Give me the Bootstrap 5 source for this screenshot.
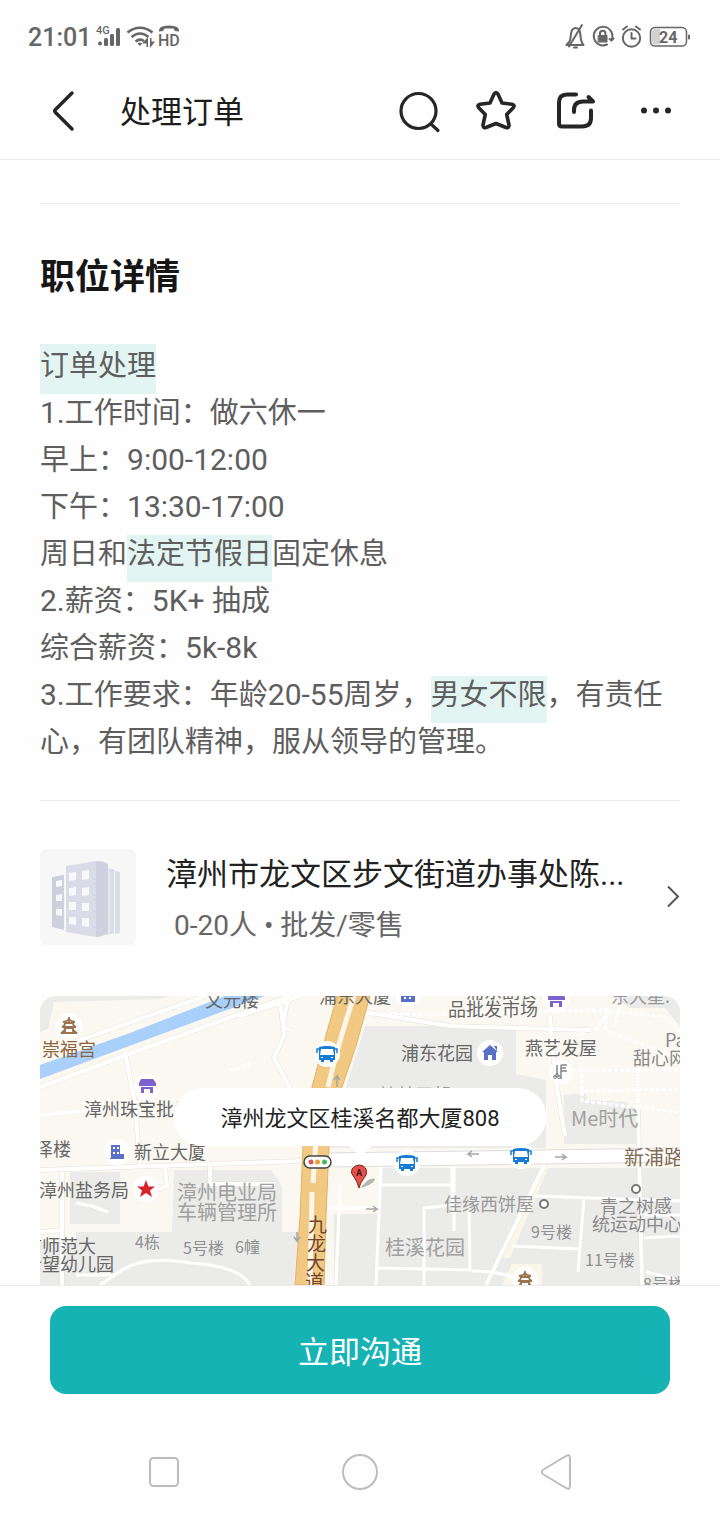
<!DOCTYPE html>
<html lang="zh-CN">
<head>
<meta charset="utf-8">
<meta name="viewport" content="width=device-width, initial-scale=1">
<title>处理订单</title>
<link href="https://cdn.jsdelivr.net/npm/bootstrap@5.3.0/dist/css/bootstrap.min.css" rel="stylesheet">
<style>
  body { font-family: Roboto, "Noto Sans CJK SC", sans-serif; background: #fefefe; color: #222; }
  svg { display: block; flex: none; }
  .status-bar { height: 72px; padding: 2px 28px 0; color: #666; }
  .clock { font-size: 25px; font-weight: 500; line-height: 32px; padding-top: 2px; }
  .top-bar { height: 88px; padding: 0 40px 4px; border-bottom: 1px solid #ececec; }
  .top-bar h1 { font-size: 31px; line-height: 46px; font-weight: 400; color: #1c1c1c; padding-bottom: 2px; }
  .icon-btn { padding: 0; border: 0; color: #262626; }
  .page-body { padding: 43px 40px 0; }
  .rule { border-top: 1px solid #ececec; }
  .section-title { font-size: 35px; line-height: 48px; font-weight: 700; color: #161616; margin: 50px 0 41px; }
  .detail-text { font-size: 29px; line-height: 47px; color: #5e5e5e; margin-bottom: 34px; }
  .num { font-size: 30px; line-height: 1; }
  .hl { background: #e3f5f3; padding: 2px 0 11px; }
  .hl-top { padding-top: 5px; }
  .company { padding: 45px 0 48px; color: #222; }
  .company-text { min-width: 0; margin-left: 30px; }
  .company-name { font-size: 31px; line-height: 58px; }
  .company-meta { font-size: 28px; line-height: 44px; color: #666; padding-left: 8px; }
  .map-box { border-radius: 16px 16px 0 0; background: #faf8f0; overflow: hidden; }
  .map-box svg { width: 100%; height: auto; }
  .map-tip { top: 92px; left: 50%; transform: translateX(-50%); background: #fff; border-radius: 29px; font-size: 22px; line-height: 54px; padding: 4px 47px 0; color: #222; white-space: nowrap; }
  .map-tip::after { content: ""; position: absolute; left: 50%; top: 100%; border: 11px solid transparent; border-top-color: #fff; border-bottom: 0; transform: translateX(-50%); }
  .action-bar { border-top: 1px solid #ececec; padding: 20px 50px 0; background: #fefefe; }
  .btn-chat { background: #16b3b4; color: #fff; border: 0; border-radius: 16px; font-size: 31px; line-height: 48px; padding: 23px 0 17px; }
  .btn-chat:hover { background: #129fa0; color: #fff; }
  .sys-nav { padding: 56px 50px 28px; }
  .sys-nav .icon-btn { color: #bdbdbd; }
</style>
</head>
<body class="min-vh-100 d-flex flex-column">

<header>
  <div class="status-bar d-flex align-items-center justify-content-between">
    <div class="d-flex align-items-center gap-1">
      <span class="clock">21:01</span>
      <svg width="88" height="28" viewBox="-2 0 88 28" fill="currentColor" aria-hidden="true">
        <text x="-1" y="11" font-size="11" font-weight="500">4G</text>
        <circle cx="3" cy="20.500" r="2"/>
        <rect x="7" y="15" width="4" height="8" rx="1.500"/><rect x="13" y="11" width="4" height="12" rx="1.500"/><rect x="19" y="5" width="4" height="18" rx="1.500"/>
        <g fill="none" stroke="currentColor" stroke-width="2.600"><path d="M30.500 9.500Q43 0 55.500 9.500M34.500 14Q43 7 51.500 14M38.500 18.500Q43 15 47 18"/></g>
        <path d="M40.500 20.500Q43 18.500 45 20.500L43 23ZM51 14v10h-1.500v-3.500h-4.500ZM53 25V15h1.500v3.500H58Z"/>
        <path d="M62 8.500Q61 2.500 72 2.500Q83 2.500 82 8.500L78 8L76.500 5.500H67.500L66 8Z"/>
        <text x="61" y="23" font-size="16" font-weight="500">HD</text>
      </svg>
    </div>
    <svg width="128" height="28" viewBox="0 0 128 28" fill="none" stroke="currentColor" stroke-width="2" stroke-linecap="round" stroke-linejoin="round" aria-label="电量 24">
      <path d="M2.500 22h17M5.500 18.500C7.500 16 6 9 8.500 6.500Q11.500 3.500 15 6.500C17.500 9 15 17 19.500 22M2.500 22L5.500 18.500M18 2L5 23.500M10 24.500h3"/>
      <path d="M43 21.500A9.300 9.300 0 1 1 47.500 17M49.500 15.500l-2 2-2-1.500"/>
      <rect x="34.500" y="12.500" width="8.500" height="6.500" fill="currentColor" stroke-width="1"/><path d="M36 12V10.500a2.700 2.700 0 0 1 5.400 0V12"/>
      <circle cx="67.500" cy="15" r="8.700"/><path d="M67.500 10v5.500h4M59 6.500l4-3M76 6.500l-4-3"/>
      <rect x="86.500" y="4.500" width="36" height="18.500" rx="4.500" stroke-width="1.500"/>
      <path d="M91.500 6H96v15.500h-4.500A3.500 3.500 0 0 1 88 18V9.500A3.500 3.500 0 0 1 91.500 6Z" fill="#d2d2d2" stroke="none"/>
      <path d="M125 12.500v3"/>
      <text x="95" y="20" font-size="16" font-weight="700" fill="currentColor" stroke="none">24</text>
    </svg>
  </div>

  <nav class="top-bar d-flex align-items-center justify-content-between" aria-label="页面导航">
    <div class="d-flex align-items-center">
      <button type="button" class="btn icon-btn me-4" aria-label="返回">
        <svg width="56" height="56" viewBox="0 0 56 56" fill="none" stroke="currentColor" stroke-width="3.500" stroke-linecap="round" stroke-linejoin="round"><path d="M32 7L15.500 23.500Q14 25 15.500 26.500L32 43"/></svg>
      </button>
      <h1 class="m-0">处理订单</h1>
    </div>
    <div class="d-flex align-items-center">
      <button type="button" class="btn icon-btn" aria-label="搜索">
        <svg width="80" height="48" viewBox="0 0 80 48" fill="none" stroke="currentColor" stroke-width="3.200" stroke-linecap="round"><circle cx="38.500" cy="21" r="17.500"/><path d="M51 34l7 6.500"/></svg>
      </button>
      <button type="button" class="btn icon-btn" aria-label="收藏">
        <svg width="80" height="48" viewBox="0 0 80 48" fill="none" stroke="currentColor" stroke-width="3.600" stroke-linejoin="round"><path d="M33.800 4.500Q36 0.800 38.200 4.500L42 13L52 14.300Q55.500 15 53 18L46.700 24.500L49 35Q49 38.500 46 37.500L36 33.500L26 37.500Q23 38.500 23 35L25.300 24.500L19 18Q16.500 15 20 14.300L30 13Z"/></svg>
      </button>
      <button type="button" class="btn icon-btn" aria-label="分享">
        <svg width="80" height="48" viewBox="0 0 80 48" fill="none" stroke="currentColor" stroke-width="4" stroke-linecap="round" stroke-linejoin="round"><path d="M36 4.500H27Q19 4.500 19 12.500V33.500Q19 36.500 22 36.500H42Q51 36.500 51 28V20.500M34 22V20Q34 11.500 43 11.500H53L48.500 7"/></svg>
      </button>
      <button type="button" class="btn icon-btn" aria-label="更多">
        <svg width="60" height="48" viewBox="0 0 60 48" fill="currentColor"><circle cx="24" cy="20.500" r="3"/><circle cx="36" cy="20.500" r="3"/><circle cx="48" cy="20.500" r="3"/></svg>
      </button>
    </div>
  </nav>
</header>

<main class="page-body flex-grow-1">
  <section class="rule">
    <h2 class="section-title">职位详情</h2>
    <p class="detail-text"><span class="hl hl-top">订单处理</span><br><span class="num">1.</span>工作时间：做六休一<br>早上：<span class="num">9:00-12:00</span><br>下午：<span class="num">13:30-17:00</span><br>周日和<span class="hl">法定节假日</span>固定休息<br><span class="num">2.</span>薪资：<span class="num">5K+ </span>抽成<br>综合薪资：<span class="num">5k-8k</span><br><span class="num">3.</span>工作要求：年龄<span class="num">20-55</span>周岁，<span class="hl">男女不限</span>，有责任心，有团队精神，服从领导的管理。</p>
  </section>

  <a href="#company" class="company rule d-flex align-items-center text-decoration-none">
    <svg width="96" height="96" viewBox="0 0 96 96" aria-hidden="true">
      <rect width="96" height="96" rx="7" fill="#f7f7f7"/>
      <path d="M12 28l12-2v55l-12-3Z" fill="#ced0dc"/>
      <path d="M66 18l9 3v63l-9 2ZM75 22l5 1v61l-5 1Z" fill="#dadce7"/><path d="M69 19v66M74.500 22v63" stroke="#f4f4f8"/>
      <path d="M26 17l30-5v76l-30-5Z" fill="#d9dbe6"/><path d="M56 12q8 0 12 3v69q-6 4-12 4Z" fill="#cfd1de"/>
      <g fill="#f8f8fb"><path d="M16 32l6-1v6l-6 1ZM16 46l6-1v7h-6ZM16 60h6v7l-6-1ZM29 24l7-1v8l-7 1ZM29 39l7-1v8l-7 1ZM29 53h7v8h-7ZM29 68h7v8l-7-1ZM42 22l7-1v9l-7 1ZM42 39l7-1v8l-7 1ZM42 54h7v8h-7ZM42 69h7v9l-7-1Z"/></g>
    </svg>
    <div class="company-text flex-grow-1">
      <div class="company-name text-truncate">漳州市龙文区步文街道办事处陈...</div>
      <div class="company-meta">0-20人 • 批发/零售</div>
    </div>
    <svg width="16" height="24" viewBox="0 0 16 24" fill="none" stroke="#555" stroke-width="2" aria-hidden="true"><path d="M4 1.500L14 11.500L4 21.500"/></svg>
  </a>

  <section class="map-box position-relative" aria-label="工作地点">
    <svg viewBox="0 0 640 289" font-size="18" fill="#666">
      <g fill="#ebebe9">
        <path d="M0 0H130L120 3L14 6L8 33L0 36Z"/>
        <path d="M325 30H476V78L506 84V152H290L306 91Z"/>
        <path d="M524 99L545 97L548 104L586 106L598 115V148H524Z"/>
        <path d="M30 176H80V228H30ZM134 174H231L242 190V236H132ZM36 236H258L254 289H0V246H36ZM342 172H640V289H294V218H338Z"/>
        <path d="M572 0H640V30L625 12H590Z"/>
      </g>
      <path d="M462 289L472 268H502V289ZM500 172L508 172L470 262H460Z" fill="#faf6e8"/>
      <path d="M0 69L90 37L185 0H225L100 46L0 83Z" fill="#a9d0fb"/>
      <g fill="none" stroke="#e2e2dd" stroke-width="5">
        <path id="roads" d="M0 91L100 54L250 0M0 60L57 38L165 0M85 56L95 108L100 170M0 174L200 167L262 165M22 176V289M0 236L22 234M125 171L127 190L108 198M200 20L260 0M240 3L244 40L234 62L250 92M170 170V188H235M248 0L243 31L250 34M324 16L410 30L550 34M510 20L515 80L525 140M598 112L602 289M505 168L446 289"/>
      </g>
      <g fill="none" stroke="#fffffd" stroke-width="4"><use href="#roads"/></g>
      <g fill="none" stroke="#fff" stroke-width="3">
        <path d="M85 58L96 110L0 119M36 207L52 210L68 216M36 279H75Q100 258 150 267Q200 270 210 289M75 279L60 289M285 212H338M300 190L296 289M341 171L336 289M342 189H412V168M384 289V212L412 209V170M338 272L430 274L429 210M414 168V235M495 200L640 205M472 250L539 253M544 202L538 276M432 275Q470 275 486 289M604 219H640M604 242L640 240M606 276L640 284"/>
        <path d="M324 18H400L566 14M555 34L570 15L625 21L640 36M542 36V105L640 116M520 74H640M544 95L640 93M598 73V115M566 12V35L640 62M582 0L575 30M190 74l9-1 11-6" stroke-dasharray="4 2"/>
      </g>
      <path d="M285 164L640 159" stroke="#ddd" stroke-width="15"/><path d="M285 164L640 159" stroke="#fff" stroke-width="13"/>
      <path d="M297 0L283 50L272 91L263 150L260 220L255 289H284L286 220L289 150L302 91L316 50L330 0Z" fill="#f2c982" stroke="#dfb269" stroke-width="1"/>
      <path d="M314 0Q298 48 288 91M277 130L273 187M272 196L270 289" fill="none" stroke="#fcf6e9" stroke-width="5"/>
      <g fill="none" stroke="#a5a5a5" stroke-width="1.500"><path d="M297 91V80l-3 4M297 80l3 4M257 236v9l-3-4M257 245l3-4M326 213h11l-4-3M337 213l-4 3M439 158h-11l4-3M428 158l4 3M515 161h11l-4-3M526 161l-4 3"/></g>

      <g fill="#fff"><circle cx="29" cy="30" r="13"/><circle cx="107" cy="91" r="13"/><circle cx="77" cy="156" r="13"/><circle cx="106" cy="193" r="13"/><circle cx="287" cy="58" r="13"/><circle cx="368" cy="-2" r="13"/><circle cx="450" cy="57" r="13"/><circle cx="516" cy="3" r="13"/><circle cx="521" cy="76" r="12"/><circle cx="367" cy="167" r="13"/><circle cx="481" cy="160" r="13"/><circle cx="485" cy="284" r="13"/></g>
      <g id="pagoda" fill="none" stroke="#9a744f" stroke-width="1.800"><path d="M29 21v5M23 26q6-1 6-4q0 3 6 4M22 31q3-1 3-4h8q0 3 3 4ZM21 37q4-2 4-5h8q0 3 4 5ZM25 32v5M33 32v5"/></g>
      <use href="#pagoda" x="456" y="254"/>
      <g id="shop" fill="#7c62cc"><path d="M101 83h12l3 4v3H99v-3ZM101 91h12v6h-3v-4h-6v4h-3Z"/></g>
      <use href="#shop" x="409" y="-86"/>
      <path fill="#5870c8" fill-rule="evenodd" d="M71 149h9v9h4v5H70v-1h1ZM73 151v2h2v-2ZM77 151v2h2v-2ZM73 156v2h2v-2ZM77 156v2h2v-2ZM361 0h14v6h-14ZM364 1v2h2v-2ZM369 1v2h2v-2Z"/>
      <path fill="#5870c8" d="M450 49l8 7h-2v8h-4v-5h-4v5h-4v-8h-2ZM454 50h3v5Z"/>
      <path d="M106 184L108.500 190.500H115L110 194.500L112 201L106 197L100 201L102 194.500L97 190.500H103.500Z" fill="#d8232a"/>
      <g id="bus"><path fill="#157bd4" d="M279 51q8-2 16 0v13h-2v2h-3v-2h-6v2h-3v-2h-2Z"/><path fill="#fff" d="M281 53h12l1 6h-14ZM281 61h2v1h-2ZM291 61h2v1h-2Z"/><path d="M279 53h-2v4M295 53h2v4" fill="none" stroke="#157bd4" stroke-width="1.500"/></g>
      <use href="#bus" x="80" y="109"/><use href="#bus" x="194" y="102"/>
      <path d="M517 69v8M521 69h6M521 72h5M521 75h6M521 69v14M517 77l-2 4M517 77l2 4" stroke="#888" stroke-width="1.500"/><circle cx="515" cy="81" r="1.500" fill="none" stroke="#888"/><circle cx="519" cy="81" r="1.500" fill="none" stroke="#888"/>
      <g fill="#fff" stroke="#777" stroke-width="2"><circle cx="504" cy="208" r="4"/><circle cx="596" cy="193" r="4"/></g>
      <rect x="264" y="160" width="27" height="12" rx="6" fill="#fff" stroke="#444" stroke-width="1.500"/><circle cx="271" cy="166" r="2.500" fill="#e45655"/><circle cx="277.500" cy="166" r="2.500" fill="#e5a03d"/><circle cx="284.500" cy="166" r="2.500" fill="#49b85e"/>
      <path d="M320 192L328 184Q335 181 335 184Q332 189 320 192Z" fill="#9a9a9a" opacity=".7"/>
      <path d="M319 192Q317 185 314 181Q310 177 312 173Q315 169 319 169Q324 169 326 173Q328 178 324 182Q320 187 319 192Z" fill="#e6504b" stroke="#7e2624"/><text x="319" y="180" font-size="9" font-weight="700" fill="#3d1513" text-anchor="middle">A</text>

      <g font-family="Noto Sans CJK SC, sans-serif">
        <text x="2" y="60" fill="#8b643f">崇福宫</text>
        <text x="165" y="11">文元楼</text><text x="279" y="7">浦东大厦</text>
        <text x="426" y="2">浦东副食</text><text x="408" y="20">品批发市场</text><text x="571" y="7" fill="#999">东大星.</text>
        <text x="361" y="64">浦东花园</text><text x="485" y="59">燕艺发屋</text>
        <text x="625" y="51" fill="#888">Pa</text><text x="593" y="69" fill="#888">甜心网</text>
        <text x="44" y="120">漳州珠宝批发</text><text x="339" y="106" fill="#999">桂林王朝</text>
        <text x="-5" y="160">泽楼</text><text x="94" y="163">新立大厦</text>
        <text x="-1" y="201">漳州盐务局</text>
        <text x="-16" y="257">市师范大</text><text x="-16" y="275">希望幼儿园</text>
        <g fill="#999"><text x="404" y="215">佳缘西饼屋</text><text x="560" y="217" fill="#888">青之树感</text><text x="552" y="235" fill="#888">统运动中心</text></g>
        <g font-size="20" fill="#a0a0a0"><text x="137" y="204">漳州电业局</text><text x="137" y="224">车辆管理所</text><text x="531" y="130">Me时代</text><text x="345" y="259">桂溪花园</text></g>
        <g font-size="16" fill="#909090"><text x="95" y="252">4栋</text><text x="143" y="258">5号楼</text><text x="195" y="257">6幢</text><text x="491" y="242">9号楼</text><text x="545" y="270">11号楼</text><text x="603" y="294">8号楼</text></g>
        <text x="584" y="169" font-size="20" fill="#816c58">新浦路</text>
        <g font-size="19" fill="#75462f"><text x="268" y="236">九</text><text x="267" y="255">龙</text><text x="266" y="274">大</text><text x="265" y="293">道</text></g>
      </g>
    </svg>
    <div class="map-tip position-absolute">漳州龙文区桂溪名都大厦808</div>
  </section>
</main>

<footer class="action-bar">
  <button type="button" class="btn btn-chat w-100">立即沟通</button>
  <nav class="sys-nav d-flex justify-content-between align-items-center" aria-label="系统导航">
    <button type="button" class="btn icon-btn ms-5" aria-label="最近任务"><svg width="32" height="44" viewBox="0 0 32 44" fill="none" stroke="currentColor" stroke-width="2"><rect x="2" y="8" width="28" height="28" rx="3.500"/></svg></button>
    <button type="button" class="btn icon-btn" aria-label="主屏幕"><svg width="40" height="44" viewBox="0 0 40 44" fill="none" stroke="currentColor" stroke-width="2"><circle cx="20" cy="22" r="17"/></svg></button>
    <button type="button" class="btn icon-btn me-5" aria-label="返回上一级"><svg width="32" height="44" viewBox="0 0 32 44" fill="none" stroke="currentColor" stroke-width="2" stroke-linejoin="round"><path d="M26 6Q30 4 30 8V36Q30 40 26 38L3.500 24.500Q0 22 3.500 19.500Z"/></svg></button>
  </nav>
</footer>
<script src="https://cdn.jsdelivr.net/npm/bootstrap@5.3.0/dist/js/bootstrap.bundle.min.js"></script>
</body>
</html>
